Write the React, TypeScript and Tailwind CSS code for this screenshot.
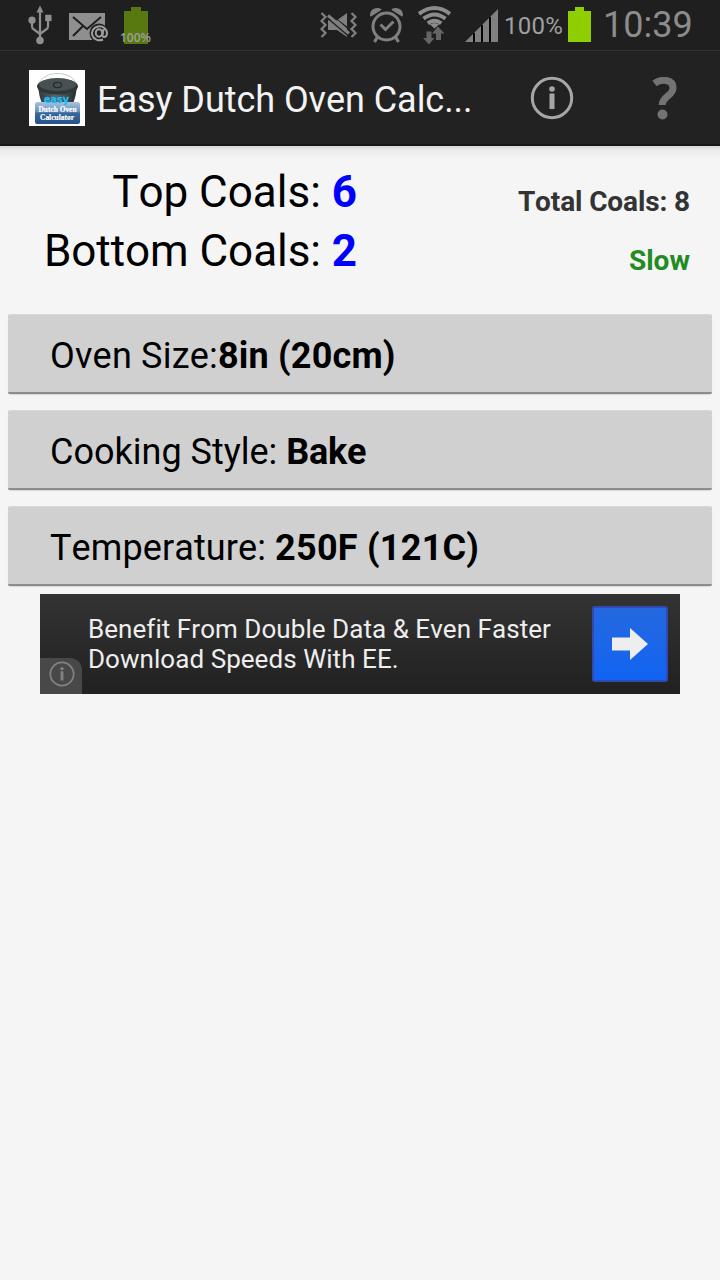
import type { ReactNode } from 'react';

function UsbIcon() {
  return (
    <svg width="24" height="40" viewBox="0 0 24 40" fill="none" stroke="#8f8f8f" strokeWidth="2.2">
      <path d="M12 7v27M4 15v6.500q0 2 2 3l6 4.500M20 15v6.500q0 2-2 3l-6 4.500" />
      <path d="M12 0.500l3.500 7h-7z" fill="#8f8f8f" stroke="none" />
      <circle cx="4" cy="15.200" r="3.600" fill="#8f8f8f" stroke="none" />
      <rect x="17.200" y="9.800" width="6.300" height="6.300" fill="#8f8f8f" stroke="none" />
      <circle cx="12" cy="35.500" r="3.800" fill="#8f8f8f" stroke="none" />
    </svg>
  );
}

function MailIcon() {
  return (
    <svg width="40" height="30" viewBox="0 0 40 30">
      <rect width="36" height="27" fill="#8f8f8f" />
      <path d="M4 4l14 12L32 4M4 23l10-10M32 23l-8-8" fill="none" stroke="#1f1f1f" strokeWidth="2" />
      <circle cx="30" cy="20" r="9.500" fill="#1f1f1f" />
      <g fill="none" stroke="#a0a0a0" strokeWidth="2">
        <path d="M34 26.500a7.500 7 0 1 1 4-6.500c0 3-1.500 4-3 4s-1.700-1-1.300-3l.8-5" />
        <ellipse cx="30" cy="20" rx="3.200" ry="3.800" />
      </g>
    </svg>
  );
}

function MuteIcon() {
  return (
    <svg width="38" height="26" viewBox="0 0 38 26" fill="none" stroke="#808080" strokeWidth="2.200">
      <path d="M1.500 1l4 4-4 4 4 4-4 4 4 4-4 4" />
      <path d="M31.500 1l4 4-4 4 4 4-4 4 4 4-4 4" />
      <path d="M8 8l10 .5 9 8V25l-10-7H8z" fill="#808080" stroke="none" />
      <path d="M18 7.500L27 1v13.500z" fill="#808080" stroke="none" />
      <path d="M8 3.500l21 18" strokeWidth="3" />
      <path d="M8 6.500l21 18" stroke="#1f1f1f" strokeWidth="1.400" />
    </svg>
  );
}

function AlarmIcon() {
  return (
    <svg width="34" height="36" viewBox="0 0 34 36" fill="none" stroke="#808080">
      <circle cx="16.500" cy="19.500" r="13.500" strokeWidth="3" />
      <path d="M10.500 17.500l5 5 8-8" strokeWidth="3" />
      <path d="M7.500 30l-3 5M25.500 30l3 5" strokeWidth="3.200" />
      <path d="M1 8.500C.5 3.500 6 .5 10.500 2.500zM32 8.500C32.500 3.500 27 .5 22.500 2.500z" fill="#808080" strokeWidth="1.800" strokeLinejoin="round" />
    </svg>
  );
}

function WifiIcon() {
  return (
    <svg width="34" height="38" viewBox="0 0 34 38">
      <g fill="none" stroke="#8c8c8c" strokeWidth="4">
        <path d="M1 7.800q15.500-11.500 31 0" />
        <path d="M5.500 12.700q11-8.500 22 0" />
        <path d="M9.800 17.300q6.700-5 13.400 0" />
      </g>
      <path d="M12 18.500q4.500-3 9 0L16.500 22.500z" fill="#8c8c8c" />
      <path d="M8.500 25.500h5V32h3l-5.500 6.500L5 32h3.500z" fill="#656565" />
      <path d="M18 34v-6.500h-4L20 20.500l6.500 7H23V34z" fill="#656565" />
    </svg>
  );
}

function SignalIcon() {
  return (
    <svg width="34" height="33" viewBox="0 0 34 33">
      <path d="M0 33L33 0v33z" fill="#808080" />
      <path d="M9 33v-9M17 33V16M25 33V8" stroke="#050505" strokeWidth="2" />
    </svg>
  );
}

function BatteryIcon() {
  return (
    <svg width="23" height="35" viewBox="0 0 23 35" fill="#8fce00">
      <path d="M7 0h9v4h7v31H0V4h7z" />
    </svg>
  );
}

function AppIcon() {
  return (
    <svg width="56" height="56" viewBox="0 0 56 56">
      <defs>
        <linearGradient id="pot" x1="0" x2="1">
          <stop offset="0" stopColor="#303839" />
          <stop offset=".45" stopColor="#5c6566" />
          <stop offset="1" stopColor="#252c2d" />
        </linearGradient>
        <linearGradient id="plate" x1="0" y1="0" x2="0" y2="1">
          <stop offset="0" stopColor="#a9c5e1" />
          <stop offset=".45" stopColor="#688eb8" />
          <stop offset=".5" stopColor="#3a689c" />
          <stop offset="1" stopColor="#26518a" />
        </linearGradient>
      </defs>
      <rect width="56" height="56" fill="#fff" />
      <path d="M10 14C14 0 43 0 47 14" fill="none" stroke="#c4c8c8" strokeWidth="1" />
      <path d="M9 17h39q-1 9-4 17H13q-3-8-4-17z" fill="url(#pot)" />
      <ellipse cx="28.500" cy="16.500" rx="20.500" ry="8" fill="#303738" />
      <ellipse cx="28.500" cy="14.500" rx="18.500" ry="6.500" fill="#485152" />
      <ellipse cx="28.500" cy="15" rx="4" ry="2.700" fill="#485152" stroke="#262c2d" strokeWidth="1.200" />
      <rect x="6" y="32" width="45" height="22" rx="2" fill="url(#plate)" />
      <text x="27.500" y="32.500" textAnchor="middle" textLength="25" lengthAdjust="spacingAndGlyphs" fontFamily="DejaVu Sans" fontWeight="700" fontSize="11" fill="#20baf5" stroke="#20baf5" strokeWidth=".3">easy</text>
      <g fontFamily="Liberation Serif" fontWeight="700" fontSize="8.500" fill="#fff" stroke="#fff" strokeWidth=".2">
        <text x="28.500" y="42" textAnchor="middle" textLength="38" lengthAdjust="spacingAndGlyphs">Dutch Oven</text>
        <text x="28" y="50.300" textAnchor="middle" textLength="34" lengthAdjust="spacingAndGlyphs">Calculator</text>
      </g>
    </svg>
  );
}

function InfoIcon({ size, color }: { size: number; color: string }) {
  return (
    <svg width={size} height={size} viewBox="0 0 44 44">
      <circle cx="22" cy="22" r="19.700" fill="none" stroke={color} strokeWidth="3" />
      <circle cx="22" cy="13" r="2.800" fill={color} />
      <path d="M19.500 17.500h5V33h-5z" fill={color} />
    </svg>
  );
}

function HelpIcon() {
  return (
    <svg width="25" height="43" viewBox="0 0 25 43">
      <path d="M2.500 6.500C9 1.500 21 2 21 11c0 8-10.800 8-10.800 17" fill="none" stroke="#737373" strokeWidth="7" />
      <circle cx="10.500" cy="37.500" r="5" fill="#737373" />
    </svg>
  );
}

function StatusBar() {
  return (
    <div className="flex h-[51px] items-start border-b border-[#303030] bg-[#1f1f1f] pl-7">
      <div className="pt-[5px]"><UsbIcon /></div>
      <div className="ml-[17px] pt-[13px]"><MailIcon /></div>
      <div className="relative ml-[15px] pt-[7px]">
        <svg width="24" height="37" viewBox="0 0 24 37" fill="#58790f">
          <path d="M7 0h10v4h7v33H0V4h7z" />
        </svg>
        <span className="absolute -left-[4px] top-[31px] font-['Open_Sans',sans-serif] text-[12px] font-semibold leading-[14px] text-[#a0a0a0]">100%</span>
      </div>
      <div className="ml-[172px] pt-[12px]"><MuteIcon /></div>
      <div className="ml-[12px] pt-[7px]"><AlarmIcon /></div>
      <div className="ml-[14px] pt-[6px]"><WifiIcon /></div>
      <div className="ml-[13px] pt-[9px]"><SignalIcon /></div>
      <span className="ml-[5px] w-[64px] whitespace-nowrap pt-[11px] text-[24px] leading-[30px] tracking-[0.3px] text-[#a0a0a0]">100%</span>
      <div className="pt-[7px]"><BatteryIcon /></div>
      <span className="ml-[12px] whitespace-nowrap pt-[4px] text-[36px] leading-[42px] text-[#8c8c8c]">10:39</span>
    </div>
  );
}

function ActionBar() {
  return (
    <div className="flex h-[95px] items-center border-b-2 border-[#171717] bg-[#222222] pl-[29px]">
      <AppIcon />
      <h1 className="ml-[12px] w-[433px] whitespace-nowrap pt-[4px] text-[36px] leading-[44px] tracking-[-0.05px] text-[#f3f3f3]">Easy Dutch Oven Calc...</h1>
      <InfoIcon size={44} color="#a6a6a6" />
      <div className="ml-[78px] pt-[2px]"><HelpIcon /></div>
    </div>
  );
}

function OptionButton({ children }: { children: ReactNode }) {
  return (
    <button className="block h-20 w-full whitespace-nowrap rounded-[2px] border-b-2 border-t border-b-[#8c8c8c] border-t-[#dadada] bg-[#d0d0d0] pl-[42px] pt-[5px] text-left text-[36px] leading-[44px] text-black shadow-[0_1px_1px_#d8d8d8]">
      {children}
    </button>
  );
}

export default function App() {
  return (
    <div className="flex h-[1280px] w-[720px] flex-col overflow-hidden bg-[#f5f5f5] font-['Roboto',sans-serif] [font-kerning:none]">
      <StatusBar />
      <ActionBar />
      <div className="h-[15px] shrink-0 bg-linear-to-b from-[#d8d8d8] via-[#ececec] via-30% to-[#f5f5f5]" />

      <section className="flex h-[153px] shrink-0 justify-between pr-[30px]">
        <div className="w-[357px] whitespace-nowrap pt-[2px] text-right text-[44px] leading-[59px] text-black">
          <p>Top Coals: <b className="text-[#0000ff]">6</b></p>
          <p className="tracking-[-0.05px]">Bottom Coals: <b className="text-[#0000ff]">2</b></p>
        </div>
        <div className="whitespace-nowrap pt-[11px] text-right text-[28px] font-bold leading-[59px] text-[#333333]">
          <p className="tracking-[-0.12px]">Total Coals: 8</p>
          <p className="text-[#228b22]">Slow</p>
        </div>
      </section>

      <div className="flex flex-col gap-4 px-2">
        <OptionButton>
          <span className="tracking-[0.2px]">Oven Size:</span>
          <b className="tracking-[0.2px]">8in (20cm)</b>
        </OptionButton>
        <OptionButton>
          Cooking Style: <b className="tracking-[-0.2px]">Bake</b>
        </OptionButton>
        <OptionButton>
          <span className="tracking-[0.1px]">Temperature: </span>
          <b className="tracking-[0.25px]">250F (121C)</b>
        </OptionButton>
      </div>

      {/* Ad banner */}
      <div className="relative mx-10 mt-2 flex h-[100px] shrink-0 items-center justify-between bg-linear-to-b from-[#333333] to-[#212121] pl-12 pr-3">
        <p className="whitespace-nowrap text-[26px] leading-[30px] tracking-[0.05px] text-[#eeeeee]">
          Benefit From Double Data &amp; Even Faster
          <br />
          Download Speeds With EE.
        </p>
        <div className="flex size-[76px] items-center justify-center rounded-[3px] border-2 border-[#3149b4] bg-linear-to-b from-[#2468df] to-[#1064f2]">
          <svg width="36" height="32" viewBox="0 0 36 32">
            <path d="M0 9.500h18V0l18 16-18 16v-9.500H0z" fill="#eeeeee" />
          </svg>
        </div>
        <div className="absolute bottom-0 left-0 flex h-9 w-[42px] items-center justify-center rounded-tr-[12px] bg-[#484848] pl-[2px] pb-[4px]">
          <InfoIcon size={26} color="#828282" />
        </div>
      </div>
    </div>
  );
}
